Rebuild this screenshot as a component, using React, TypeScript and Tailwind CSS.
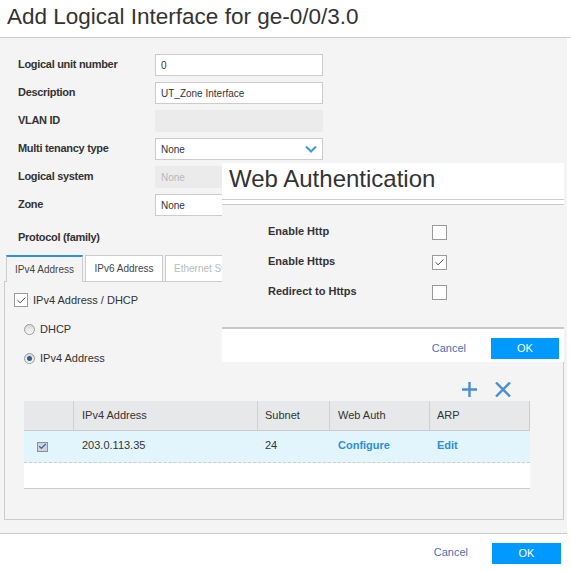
import { Check } from 'lucide-react';

const font = { fontFamily: '"Liberation Sans", Arial, sans-serif' };

const fields = [
  { label: 'Logical unit number', value: '0', kind: 'text' },
  { label: 'Description', value: 'UT_Zone Interface', kind: 'text' },
  { label: 'VLAN ID', value: '', kind: 'disabled' },
  { label: 'Multi tenancy type', value: 'None', kind: 'select' },
  { label: 'Logical system', value: 'None', kind: 'disabled' },
  { label: 'Zone', value: 'None', kind: 'text' },
];

const authOptions = [
  { label: 'Enable Http', checked: false },
  { label: 'Enable Https', checked: true },
  { label: 'Redirect to Https', checked: false },
];

function Field({ kind, value }: { kind: string; value: string }) {
  if (kind === 'disabled') {
    return (
      <div className="w-[168px] h-[22px] bg-[#ebebeb] pl-[6px] flex items-center text-[10px] text-[#b8b8b8]">
        {value}
      </div>
    );
  }
  return (
    <div className="w-[168px] h-[22px] bg-white border border-[#cccccc] pl-[5px] pr-[4px] flex items-center justify-between text-[10px] text-[#333]">
      <span>{value}</span>
      {kind === 'select' && (
        <svg width="12" height="8" viewBox="0 0 12 8" className="mr-[1px]">
          <path d="M1 1.5 L6 6.5 L11 1.5" fill="none" stroke="#3b9ae1" strokeWidth="2" />
        </svg>
      )}
    </div>
  );
}

function Radio({ checked }: { checked: boolean }) {
  return (
    <span className="w-[11px] h-[11px] rounded-full border border-[#9a9a9a] bg-gradient-to-b from-[#d8d8d8] to-[#fafafa] flex items-center justify-center">
      {checked && <span className="w-[5px] h-[5px] rounded-full bg-[#2c5d93]" />}
    </span>
  );
}

function Box({ checked, size }: { checked: boolean; size: string }) {
  return (
    <span className={`${size} bg-white border border-[#9a9a9a] flex items-center justify-center`}>
      {checked && <Check className="w-[11px] h-[11px] text-[#333]" strokeWidth={2} />}
    </span>
  );
}

export default function App() {
  return (
    <div style={font} className="relative w-[571px] h-[571px] bg-white overflow-hidden text-[#333]">
      {/* dialog header */}
      <div className="h-[38px] border-b border-[#cccccc] pl-[7px] flex items-center">
        <h1 className="text-[22.5px] leading-none text-[#333] -mt-[2px]">Add Logical Interface for ge-0/0/3.0</h1>
      </div>

      {/* dialog body */}
      <div className="w-[567px] h-[496px] bg-[#f4f4f4] border-b border-[#cccccc] pt-[16px]">
        <div className="pl-[18px] flex flex-col gap-[6px]">
          {fields.map((f) => (
            <div key={f.label} className="flex items-center h-[22px]">
              <span className="w-[137px] text-[11px] font-bold tracking-[-0.3px] -mt-[2px]">{f.label}</span>
              <Field kind={f.kind} value={f.value} />
            </div>
          ))}
        </div>
        <div className="pl-[18px] mt-[10px] h-[22px] flex items-center text-[11px] font-bold tracking-[-0.3px]">
          Protocol (family)
        </div>

        {/* protocol tabs */}
        <div className="mt-[7px] ml-[4px] pl-[2px] flex gap-[2px] h-[26px] text-[10px]">
          <div className="w-[77px] h-[27px] bg-[#f4f4f4] border-x border-[#cccccc] border-t-2 border-t-[#2d8fe6] flex items-center justify-center text-[#444] relative z-10">
            IPv4 Address
          </div>
          <div className="w-[78px] bg-white border border-b-0 border-[#cccccc] flex items-center justify-center text-[#444]">
            IPv6 Address
          </div>
          <div className="w-[110px] bg-white border border-b-0 border-[#cccccc] flex items-center pl-[8px] text-[#bbbbbb]">
            Ethernet Switching
          </div>
        </div>

        {/* IPv4 panel */}
        <div className="ml-[4px] w-[560px] h-[239px] border border-[#cccccc] pt-[11px]">
          <div className="pl-[9px] flex flex-col gap-[15px] text-[11px]">
            <div className="h-[14px] flex items-center gap-[5px]">
              <Box checked size="w-[14px] h-[14px]" />
              <span>IPv4 Address / DHCP</span>
            </div>
            <div className="h-[14px] pl-[10px] flex items-center gap-[5px]">
              <Radio checked={false} />
              <span>DHCP</span>
            </div>
            <div className="h-[14px] pl-[10px] flex items-center gap-[5px]">
              <Radio checked />
              <span>IPv4 Address</span>
            </div>
          </div>

          <div className="mt-[17px] h-[15px] flex justify-end items-center gap-[18px] pr-[52px]">
            <svg width="15" height="15" viewBox="0 0 15 15">
              <path d="M7.5 0 V15 M0 7.5 H15" stroke="#4a8fd6" strokeWidth="2.4" />
            </svg>
            <svg width="16" height="15" viewBox="0 0 16 15">
              <path d="M1 0.5 L15 14.5 M15 0.5 L1 14.5" stroke="#4a8fd6" strokeWidth="2.4" />
            </svg>
          </div>

          {/* address table */}
          <div className="mt-[4px] ml-[19px] w-[506px] text-[11px]">
            <div className="h-[30px] bg-[#e6e8e9] border-b border-[#cccccc] flex">
              <div className="w-[50px] border-r border-[#d0d0d0]" />
              <div className="w-[184px] border-r border-[#d0d0d0] pl-[8px] flex items-center">IPv4 Address</div>
              <div className="w-[72px] border-r border-[#d0d0d0] pl-[7px] flex items-center">Subnet</div>
              <div className="w-[100px] border-r border-[#d0d0d0] pl-[8px] flex items-center">Web Auth</div>
              <div className="w-[100px] border-r border-[#cccccc] pl-[7px] flex items-center">ARP</div>
            </div>
            <div className="h-[32px] bg-[#e2f5fc] border-b border-dashed border-[#cfcfcf] flex items-center">
              <div className="w-[50px] pl-[13px] flex items-center">
                <span className="w-[11px] h-[10px] border border-[#8a8f9a] bg-[#cdd3e0] flex items-center justify-center">
                  <Check className="w-[9px] h-[9px] text-[#3a5ba8]" strokeWidth={3} />
                </span>
              </div>
              <div className="w-[184px] pl-[8px] -mt-[2px]">203.0.113.35</div>
              <div className="w-[72px] pl-[7px] -mt-[2px]">24</div>
              <div className="w-[100px] pl-[8px] -mt-[2px] font-bold text-[#2b8fe0]">Configure</div>
              <div className="w-[100px] pl-[7px] -mt-[2px] font-bold text-[#2b8fe0]">Edit</div>
            </div>
            <div className="h-[26px] bg-white border-b border-[#cccccc]" />
          </div>
        </div>
      </div>

      {/* dialog footer */}
      <div className="flex justify-end items-start pt-[9px] pr-[10px] text-[11px]">
        <span className="h-[21px] leading-[19px] mr-[24px] text-[#4a6fb8]">Cancel</span>
        <button className="w-[69px] h-[21px] bg-[#0099ff] text-white">OK</button>
      </div>

      {/* web authentication popup */}
      <div className="absolute left-[222px] top-[163px] w-[342px] h-[199px] bg-white">
        <div className="h-[37px] border-b border-[#cccccc] pl-[7px] flex items-center">
          <h2 className="text-[24px] leading-none text-[#333] -mt-[5px]">Web Authentication</h2>
        </div>
        <div className="mt-[4px] border-t border-[#cccccc] border-b-2 border-b-[#c8c8c8] bg-[#f4f4f4] h-[125px] pt-[20px] pl-[46px]">
          <div className="flex flex-col gap-[15px]">
            {authOptions.map((o) => (
              <div key={o.label} className="h-[15px] flex items-center">
                <span className="w-[164px] text-[11px] font-bold -mt-[3px]">{o.label}</span>
                <Box checked={o.checked} size="w-[15px] h-[15px]" />
              </div>
            ))}
          </div>
        </div>
        <div className="h-[33px] flex justify-end items-start pt-[9px] pr-[5px] text-[11px]">
          <span className="h-[21px] leading-[21px] mr-[25px] text-[#4a6fb8]">Cancel</span>
          <button className="w-[68px] h-[21px] bg-[#0099ff] text-white">OK</button>
        </div>
      </div>
    </div>
  );
}
